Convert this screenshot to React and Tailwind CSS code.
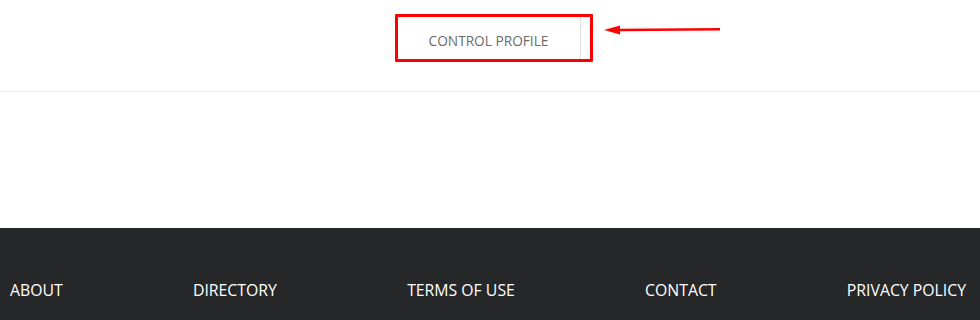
export default function App() {
  const links = ["ABOUT", "DIRECTORY", "TERMS OF USE", "CONTACT", "PRIVACY POLICY"];
  return (
    <div className="relative w-[980px] h-[320px] bg-white overflow-hidden" style={{ fontFamily: '"Open Sans", sans-serif' }}>
      <div className="h-[92px] border-b border-[#eeeeee] flex justify-center pt-[16px]">
        <div className="ml-[-2px] h-[44px] w-[184px] border-r border-[#e2e2e2] flex items-center justify-center pt-[6px] text-[13.7px] text-[#6b6b6b]">
          CONTROL PROFILE
        </div>
      </div>
      <div className="h-[136px]" />
      <footer className="bg-[#262729] h-[92px] flex justify-between items-start pl-[10px] pr-[14px] pt-[50px] text-white text-[15.8px] leading-6">
        {links.map((l) => (
          <span key={l}>{l}</span>
        ))}
      </footer>
      <div className="absolute left-[395px] top-[14px] w-[198px] h-[48px] border-[3px] border-[#ff0000] rounded-[1px]" />
      <svg className="absolute left-[603px] top-[23px]" width="120" height="14" viewBox="0 0 120 14">
        <line x1="14" y1="7" x2="117" y2="6.3" stroke="#ff0000" strokeWidth="2.6" />
        <polygon points="1,7 17,2.5 17,11.5" fill="#ff0000" />
      </svg>
    </div>
  );
}
